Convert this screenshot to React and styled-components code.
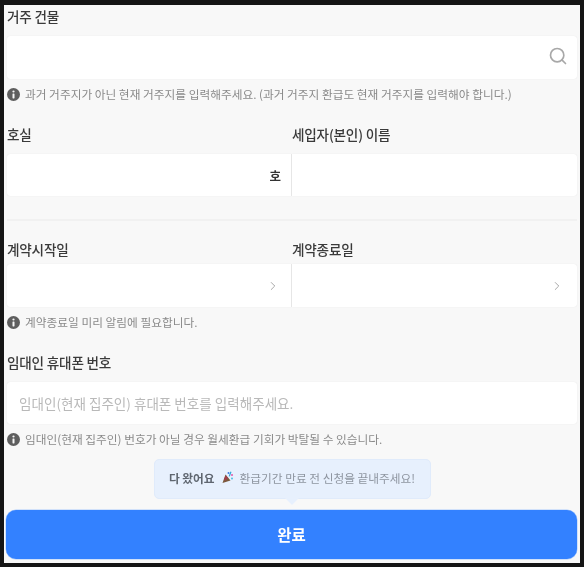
import React from "react";
import styled, { createGlobalStyle } from "styled-components";
import { Search, ChevronRight } from "lucide-react";

const Global = createGlobalStyle`
  html, body { margin: 0; padding: 0; background: #151515; }
  * { box-sizing: border-box; }
  body { font-family: "Noto Sans CJK KR", "Noto Sans", sans-serif; }
`;

const Screen = styled.main`
  width: 576px;
  height: 558px;
  margin: 5px 0 0 4px;
  padding: 0 3px;
  background: #f8f8f8;
  display: flex;
  flex-direction: column;
  overflow: hidden;
  filter: blur(0.55px);
`;

const Label = styled.div`
  height: 24px;
  line-height: 22px;
  font-size: 13.6px;
  font-weight: 500;
  color: #3a3a3a;
  letter-spacing: -0.2px;
  margin-top: ${(p) => p.$top || 0}px;
  margin-bottom: ${(p) => p.$bottom ?? 7}px;
`;

const Card = styled.div`
  height: ${(p) => p.$height || 42}px;
  background: #fff;
  border-radius: 3px;
  box-shadow: 0 0 1px rgba(0, 0, 0, 0.12);
  display: flex;
  align-items: center;
  justify-content: ${(p) => p.$justify || "flex-start"};
  padding: 0 ${(p) => p.$right ?? 12}px 0 12px;
  color: #333;
  font-size: 12.5px;
  font-weight: 700;
`;

const Placeholder = styled.span`
  font-size: 13.55px;
  font-weight: 400;
  color: #b9b9b9;
`;

const Hint = styled.div`
  height: 18px;
  margin-top: 6px;
  display: flex;
  align-items: center;
  gap: 5px;
  font-size: 11.7px;
  color: #8a8a8a;
  white-space: nowrap;
`;

const HintText = styled.span`
  margin-top: -2px;
`;

const Columns = styled.div`
  display: grid;
  grid-template-columns: 285px 285px;
`;

const LeftCard = styled(Card)`
  border-radius: 3px 0 0 3px;
  border-right: 1.5px solid #e9e9e9;
`;

const RightCard = styled(Card)`
  border-radius: 0 3px 3px 0;
`;

const Divider = styled.div`
  height: 2px;
  margin: 23px 0 17px;
  background: #f1f1f1;
`;

const Bubble = styled.div`
  position: relative;
  align-self: center;
  width: 277px;
  height: 40px;
  margin-top: 11px;
  padding-bottom: 3px;
  background: #e7f0fd;
  border: 1px solid #e0ebfb;
  border-radius: 5px;
  display: flex;
  align-items: center;
  justify-content: center;
  gap: 6px;
  font-size: 11.7px;
  color: #8e95a0;
  white-space: nowrap;
  &::after {
    content: "";
    position: absolute;
    left: 50%;
    bottom: -7px;
    margin-left: -7px;
    border-left: 7px solid transparent;
    border-right: 7px solid transparent;
    border-top: 7px solid #e7f0fd;
  }
`;

const BubbleStrong = styled.strong`
  font-weight: 700;
  color: #5f6670;
`;

const SubmitButton = styled.button`
  width: 571px;
  height: 49px;
  margin: 11px 0 0 -1px;
  border: 0;
  border-radius: 10px;
  background: #3381ff;
  color: #fff;
  font-family: inherit;
  font-size: 15.5px;
  font-weight: 700;
  padding-bottom: 2px;
  box-shadow: 0 0 0 0.5px #a9c9fb;
`;

const SearchGlyph = styled(Search)`
  margin-top: -3px;
`;

const InfoIcon = () => (
  <svg width="13" height="13" viewBox="0 0 13 13" aria-hidden="true" style={{ flex: "none" }}>
    <circle cx="6.5" cy="6.5" r="6.5" fill="#5f5f5f" />
    <circle cx="6.5" cy="3.5" r="1.1" fill="#f7f7f7" />
    <rect x="5.5" y="5.4" width="2" height="5" rx="0.6" fill="#f7f7f7" />
  </svg>
);

const PartyIcon = () => (
  <svg width="13" height="13" viewBox="0 0 13 13" aria-hidden="true">
    <path d="M1.5 12 L4.5 3.5 L9.5 9.5 Z" fill="#7a5a3c" />
    <path d="M3 8 L5 4.5 L7 7 L4 10 Z" fill="#a33c4c" />
    <circle cx="7.5" cy="2" r="1" fill="#3f7be0" />
    <circle cx="11" cy="4" r="1" fill="#e356a8" />
    <rect x="8.5" y="0.5" width="1.2" height="5" fill="#2fa6d8" transform="rotate(20 9 3)" />
    <circle cx="11" cy="7.5" r="0.9" fill="#3fb7e0" />
  </svg>
);

const Hinted = ({ children }) => (
  <Hint>
    <InfoIcon />
    <HintText>{children}</HintText>
  </Hint>
);

const Chevron = () => <ChevronRight size={14} strokeWidth={1.3} color="#8d8d8d" />;

export default function App() {
  return (
    <>
      <Global />
      <Screen>
        <Label>거주 건물</Label>
        <Card $height={43} $justify="flex-end" $right={9}>
          <SearchGlyph size={20} strokeWidth={2} color="#a8a8a8" />
        </Card>
        <Hinted>과거 거주지가 아닌 현재 거주지를 입력해주세요. (과거 거주지 환급도 현재 거주지를 입력해야 합니다.)</Hinted>

        <Columns>
          <Label $top={20}>호실</Label>
          <Label $top={20}>세입자(본인) 이름</Label>
          <LeftCard $justify="flex-end" $right={10}>호</LeftCard>
          <RightCard />
        </Columns>

        <Divider />

        <Columns>
          <Label $bottom={2}>계약시작일</Label>
          <Label $bottom={2}>계약종료일</Label>
          <LeftCard $height={43} $justify="flex-end" $right={11}>
            <Chevron />
          </LeftCard>
          <RightCard $height={43} $justify="flex-end" $right={13}>
            <Chevron />
          </RightCard>
        </Columns>
        <Hinted>계약종료일 미리 알림에 필요합니다.</Hinted>

        <Label $top={20}>임대인 휴대폰 번호</Label>
        <Card>
          <Placeholder>임대인(현재 집주인) 휴대폰 번호를 입력해주세요.</Placeholder>
        </Card>
        <Hinted>임대인(현재 집주인) 번호가 아닐 경우 월세환급 기회가 박탈될 수 있습니다.</Hinted>

        <Bubble>
          <BubbleStrong>다 왔어요</BubbleStrong>
          <PartyIcon />
          <span>환급기간 만료 전 신청을 끝내주세요!</span>
        </Bubble>
        <SubmitButton>완료</SubmitButton>
      </Screen>
    </>
  );
}
